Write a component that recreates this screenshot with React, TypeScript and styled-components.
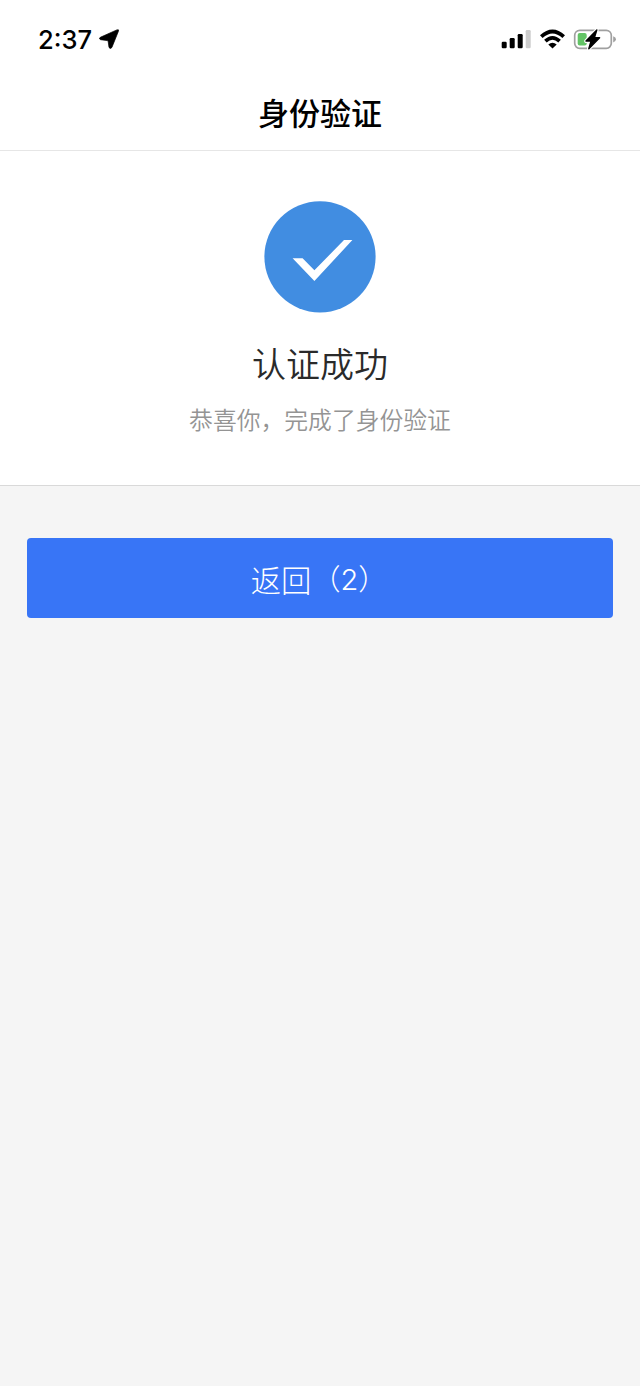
import React from "react";
import styled, { createGlobalStyle } from "styled-components";

const GlobalStyle = createGlobalStyle`
  * { box-sizing: border-box; }
  body {
    margin: 0;
    background: #f5f5f5;
    font-family: "Noto Sans CJK SC", sans-serif;
  }
`;

const Page = styled.div`
  display: flex;
  flex-direction: column;
  min-height: 1386px;
  background: #f5f5f5;
`;

const StatusBar = styled.div`
  display: flex;
  justify-content: space-between;
  height: 76px;
  padding: 24px 24px 0 38px;
  background: #fff;
`;

const StatusGroup = styled.div`
  display: flex;
  align-items: center;
  height: 30px;
`;

const Time = styled.span`
  font: 500 25.5px/30px Inter, sans-serif;
  padding-top: 1px;
  color: #000;
  width: 61px;
  white-space: nowrap;
`;

const TitleBar = styled.header`
  display: flex;
  align-items: center;
  justify-content: center;
  height: 75px;
  padding-bottom: 3px;
  background: #fff;
  border-bottom: 1px solid #e6e6e6;
`;

const Title = styled.h1`
  margin: 0;
  font-size: 31px;
  line-height: 46px;
  font-weight: 500;
  color: #000;
`;

const ResultPanel = styled.section`
  display: flex;
  flex-direction: column;
  align-items: center;
  height: 335px;
  padding-top: 50px;
  background: #fff;
  border-bottom: 1px solid #d9d9d9;
`;

const Heading = styled.h2`
  margin: 25px 0 0;
  font-size: 34px;
  line-height: 50px;
  font-weight: 350;
  color: #2a2a2a;
`;

const Message = styled.p`
  margin: 13px 0 0;
  font-size: 23.8px;
  line-height: 36px;
  font-weight: 350;
  color: #949494;
`;

const Actions = styled.div`
  padding: 52px 27px 0;
`;

const BackButton = styled.button`
  display: flex;
  align-items: center;
  justify-content: center;
  width: 100%;
  height: 80px;
  padding: 0 2px 0 0;
  border: 0;
  border-radius: 4px;
  background: #3875f6;
  color: #fff;
  font-family: "Noto Sans CJK SC", sans-serif;
  font-size: 30.4px;
  font-weight: 300;
`;

const Label = styled.span`
  line-height: 44px;
  padding-top: 1px;
`;

const Count = styled.span`
  font-family: Inter, sans-serif;
  font-size: 29px;
  line-height: 44px;
  font-weight: 300;
  padding-top: 4px;
`;

const Bracket = styled.span`
  display: inline-block;
  font-size: 29px;
  line-height: 44px;
  font-weight: 300;
  padding-bottom: 3px;
`;

const LocationIcon = () => (
  <svg width="20" height="20" viewBox="0 0 20 20">
    <path d="M17.8 .9Q20.3 0 19.4 2.3L12.9 18.4Q11.3 20.7 10 18.4L9.2 12.6Q9.1 11.6 8 11.5L1.6 10.7Q-.7 9.7 1.3 8.3Z" fill="#000" stroke="#000" strokeWidth=".7" />
  </svg>
);

const StatusIcons = () => (
  <svg width="116" height="24" viewBox="500 27 116 24">
    <rect x="501.7" y="41.7" width="5" height="6.6" rx="1.2" />
    <rect x="509.7" y="38" width="5" height="10.3" rx="1.2" />
    <rect x="517.7" y="34" width="5" height="14.3" rx="1.2" />
    <rect x="525.7" y="30" width="5" height="18.3" rx="1.2" fill="#ccc" />
    <path d="M541.3 36.7Q552.5 26.3 563.7 36.7" fill="none" stroke="#000" strokeWidth="3.8" />
    <path d="M545.4 41.2Q552.5 34.6 559.6 41.2" fill="none" stroke="#000" strokeWidth="3.7" />
    <path d="M548.3 44.4Q552.5 41.2 556.7 44.4L552.5 48.6Z" />
    <rect x="574.7" y="30.3" width="36.6" height="18" rx="5" fill="none" stroke="#a0a0a0" strokeWidth="1.7" />
    <path d="M613.2 36.2Q616 37.3 616 39.3Q616 41.3 613.2 42.4Z" fill="#a0a0a0" />
    <rect x="577.7" y="33" width="9" height="12.6" rx="2" fill="#63c466" />
    <path d="M596.8 30L586 41.1H591L588.8 48.8L599.6 37.7H594.4Z" fill="none" stroke="#fff" strokeWidth="3.8" strokeLinejoin="round" />
    <path d="M596.8 30L586 41.1H591L588.8 48.8L599.6 37.7H594.4Z" fill="#000" stroke="#000" strokeWidth="1.4" strokeLinejoin="round" />
  </svg>
);

const SuccessIcon = () => (
  <svg width="112" height="112" viewBox="264 201 112 112">
    <circle cx="320" cy="256.8" r="55.6" fill="#418de1" />
    <path d="M292.6 258.3H302.6L314.4 270.3L344 240H352.4L314.4 281Z" fill="#fff" />
  </svg>
);

export default function App() {
  return (
    <Page>
      <GlobalStyle />
      <StatusBar>
        <StatusGroup>
          <Time>2:37</Time>
          <LocationIcon />
        </StatusGroup>
        <StatusGroup>
          <StatusIcons />
        </StatusGroup>
      </StatusBar>
      <TitleBar>
        <Title>身份验证</Title>
      </TitleBar>
      <ResultPanel>
        <SuccessIcon />
        <Heading>认证成功</Heading>
        <Message>恭喜你，完成了身份验证</Message>
      </ResultPanel>
      <Actions>
        <BackButton type="button">
          <Label>返回</Label><Bracket>（</Bracket><Count>2</Count><Bracket>）</Bracket>
        </BackButton>
      </Actions>
    </Page>
  );
}
